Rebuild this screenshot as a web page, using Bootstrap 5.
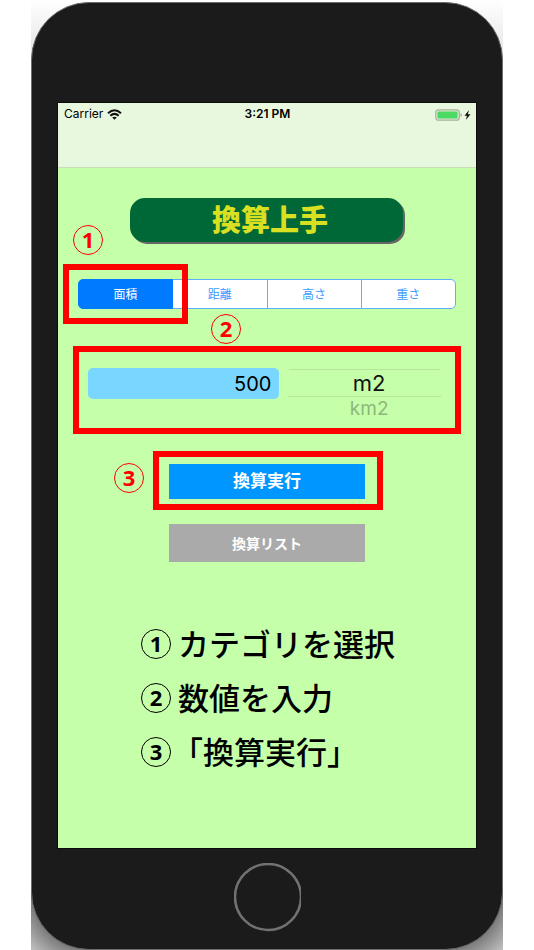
<!DOCTYPE html>
<html lang="ja">
<head>
<meta charset="utf-8">
<meta name="viewport" content="width=device-width, initial-scale=1">
<title>換算上手</title>
<link href="https://cdn.jsdelivr.net/npm/bootstrap@5.3.0/dist/css/bootstrap.min.css" rel="stylesheet">
<style>
  body { background: #fff; font-family: Inter, "Noto Sans CJK JP", sans-serif; color: #000; }
  .stage {
    margin: 0 31px; padding-top: 2px;
    background:
      radial-gradient(circle at 58px calc(100% - 58px), #777 56px, transparent 88px),
      radial-gradient(circle at calc(100% - 58px) calc(100% - 58px), #777 56px, transparent 88px),
      linear-gradient(#fff, #e2e2e2 60px, #ddd calc(100% - 60px), #d2d2d2);
  }
  .phone { background: #1b1b1b; border: 1px solid #6c6c6c; border-radius: 58px; padding: 100px 26px 17px; }
  .screen { background: #c6ffa9; outline: 1px solid #0c0c0c; padding-bottom: 69px; }
  .status-area { height: 65px; background: #e8f8de; border-bottom: 1px solid #c6dfb8; padding: 2px 5px 0 6px; font-size: 12px; line-height: 18px; }
  .status-area > div { flex: 1 1 0; }
  .banner {
    width: 273px; height: 44px; margin: 30px 73px 0 72px; padding-left: 7px; background: #006837; color: #d9e021;
    border-radius: 15px; box-shadow: 2px 2px 0 #666; font: 900 29px/41px "Noto Sans CJK JP", sans-serif;
  }
  .segments { margin: 37px 20px 0; height: 30px; display: flex; }
  .segments .btn {
    --bs-btn-color: #3a9bff; --bs-btn-bg: #fff; --bs-btn-border-color: #5fb0fa;
    --bs-btn-active-bg: #007aff; --bs-btn-active-border-color: #007aff; --bs-btn-active-color: #fff;
    flex: 1 1 0; padding: 0; font-size: 12px; line-height: 29px; border-radius: 5px;
  }
  .marker { border: 6px solid #f00; }
  .marker-over { position: absolute; inset: -16px; pointer-events: none; z-index: 6; }
  .step-no {
    display: inline-flex; align-items: center; justify-content: center; width: 30px; height: 30px; flex: none;
    border: 1px solid currentColor; border-radius: 50%; font: 700 22px/26px "Noto Sans", sans-serif; padding-bottom: 2px;
  }
  .note { position: absolute; color: #f00; pointer-events: none; z-index: 7; }
  .note-category { left: -6px; top: -55px; }
  .note-value { left: 132px; top: -38px; }
  .note-run { left: -45px; top: 6px; }
  .entry { margin: 37px 15px 0; height: 88px; padding: 16px 14px 0 9px; gap: 9px; }
  .entry .amount { flex: 177 1 0; min-width: 0; height: 31px; border: 0; border-radius: 5px; background: #78d6ff; padding: 0 8px; font-size: 20px; text-align: right; }
  .entry .unit {
    flex: 154 1 0; min-width: 0; height: 50px; border: 0; padding: 0; overflow: hidden; appearance: none;
    background: transparent; font-size: 22px; text-align: center; margin-top: 1px; outline: 0;
  }
  .unit option { height: 22px; padding: 0 0 0 9px; font-size: 19px; line-height: 22px; color: #8db779; text-align: center; min-height: 0; }
  .unit option:checked {
    height: 28px; font-size: 22px; line-height: 26px; color: #111;
    border: solid #b4e59b; border-width: 1px 0; background: linear-gradient(#c6ffa9, #c6ffa9);
    -webkit-text-fill-color: #111;
  }
  .run-box { margin: 17px 93px 0 95px; padding: 7px 12px 5px 10px; }
  .run-box .btn, .list-btn { border: 0; border-radius: 0; color: #fff; font-weight: 700; padding: 0; }
  .run-box .btn { height: 35px; background: #0096ff; font-size: 17px; }
  .list-btn { width: 196px; height: 38px; margin-top: 14px; background: #aaa; font-size: 14px; }
  .list-btn:hover { background: #999; color: #fff; }
  .steps { width: 252px; margin: 55px auto 0; font: 500 31px/51px "Noto Sans CJK JP", sans-serif; white-space: nowrap; }
  .steps li { height: 54px; gap: 7px; }
  .steps .step-no { margin-top: 12px; }
  .steps .opening { gap: 1px; }
  .home { margin-top: 15px; width: 67px; height: 69px; border: 0; background: none; padding: 0; }
</style>
<script src="https://cdn.jsdelivr.net/npm/bootstrap@5.3.0/dist/js/bootstrap.bundle.min.js"></script>
</head>
<body>
<main class="stage">
  <div class="phone">
    <div class="screen">
      <header class="status-area d-flex">
        <div class="d-flex align-items-start">
          <span>Carrier</span>
          <svg class="ms-1 mt-1" width="15" height="11" viewBox="0 0 15 11" aria-hidden="true">
            <g fill="none" stroke="#111" stroke-width="2"><path d="M1 4.3Q7.500-1.700 14 4.300"/><path d="M3.300 6.800Q7.500 3 11.700 6.800"/></g>
            <path d="M5.200 8.600Q7.500 6.800 9.800 8.600L7.500 10.800z" fill="#111"/>
          </svg>
        </div>
        <div class="text-center fw-semibold">3:21 PM</div>
        <div class="d-flex justify-content-end align-items-start">
          <svg class="mt-1" width="36" height="12" viewBox="0 0 36 12" aria-hidden="true">
            <rect x=".8" y=".8" width="23.500" height="10.400" rx="2.500" fill="#dcebd2" stroke="#a5b39c" stroke-width="1.200"/>
            <rect x="2.500" y="2.400" width="20" height="7.200" rx="1" fill="#4cd964"/>
            <path d="M25.500 4q1.500 .5 1.500 2t-1.500 2z" fill="#a5b39c"/>
            <path d="M34 1L29.500 6.700H32L30.800 11L35.500 5.200H32.800z" fill="#111"/>
          </svg>
        </div>
      </header>

      <h1 class="banner text-center">換算上手</h1>

      <div class="segments btn-group" role="group" aria-label="カテゴリ">
        <input class="btn-check" type="radio" name="category" id="area" checked>
        <label class="btn" for="area">面積<span class="marker marker-over"></span><span class="step-no note note-category" aria-hidden="true">1</span></label>
        <input class="btn-check" type="radio" name="category" id="distance">
        <label class="btn" for="distance">距離</label>
        <input class="btn-check" type="radio" name="category" id="height">
        <label class="btn" for="height">高さ</label>
        <input class="btn-check" type="radio" name="category" id="weight">
        <label class="btn" for="weight">重さ</label>
      </div>

      <div class="entry marker d-flex position-relative align-items-start">
        <span class="step-no note note-value">2</span>
        <input class="amount" type="text" inputmode="decimal" value="500" aria-label="数値">
        <select class="unit" size="2" aria-label="単位">
          <option selected>m2</option>
          <option>km2</option>
        </select>
      </div>

      <div class="run-box marker position-relative">
        <span class="step-no note note-run">3</span>
        <button class="btn w-100 d-block" type="button">換算実行</button>
      </div>
      <div class="text-center d-flex justify-content-center">
        <button class="btn list-btn" type="button">換算リスト</button>
      </div>

      <ol class="steps list-unstyled mb-0">
        <li class="d-flex align-items-start"><span class="step-no">1</span><span>カテゴリを選択</span></li>
        <li class="d-flex align-items-start"><span class="step-no">2</span><span>数値を入力</span></li>
        <li class="d-flex align-items-start opening"><span class="step-no">3</span><span>「換算実行」</span></li>
      </ol>
    </div>
    <div class="d-flex justify-content-center">
      <button class="home" type="button" aria-label="ホーム">
        <svg class="d-block" width="67" height="69" viewBox="0 0 67 69"><circle cx="34" cy="34" r="33" fill="none" stroke="#727272" stroke-width="2.500"/></svg>
      </button>
    </div>
  </div>
</main>
</body>
</html>
